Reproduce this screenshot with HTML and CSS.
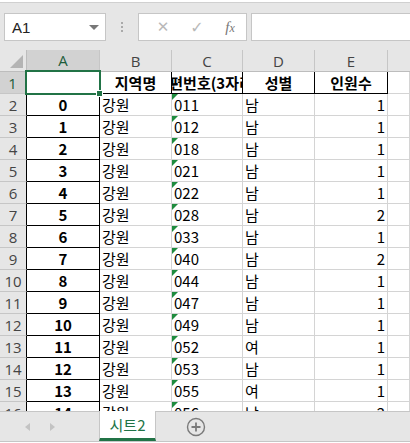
FILE: index.html
```html
<!DOCTYPE html>
<html>
<head>
<meta charset="utf-8">
<link rel="stylesheet" href="styles.css">
</head>
<body>
<div class="app">
  <div class="fbar">
    <div class="namebox"><span class="nb-text">A1</span><span class="nb-arrow"></span></div>
    <div class="dots"><i></i><i></i><i></i></div>
    <div class="cmdbox">
      <span class="cmd x">✕</span>
      <span class="cmd ok">✓</span>
      <span class="cmd fx"><i>f</i><i class="sx">x</i></span>
    </div>
    <div class="formula"></div>
  </div>

  <div class="sheet">
    <div class="corner"><span class="tri"></span></div>
    <div class="ch sel">A</div>
    <div class="ch">B</div>
    <div class="ch">C</div>
    <div class="ch">D</div>
    <div class="ch">E</div>
    <div class="ch last"></div>

    <div class="rh sel">1</div>
    <div class="c bk a1"><span class="handle"></span></div>
    <div class="c bk bold ctr">지역명</div>
    <div class="c bk bold ctr clip"><span>우편번호(3자리)</span></div>
    <div class="c bk bold ctr">성별</div>
    <div class="c bk bold ctr">인원수</div>
    <div class="c"></div>

    <div class="rh">2</div><div class="c bk bold ctr">0</div><div class="c">강원</div><div class="c tri-c">011</div><div class="c">남</div><div class="c num">1</div><div class="c"></div>
    <div class="rh">3</div><div class="c bk bold ctr">1</div><div class="c">강원</div><div class="c tri-c">012</div><div class="c">남</div><div class="c num">1</div><div class="c"></div>
    <div class="rh">4</div><div class="c bk bold ctr">2</div><div class="c">강원</div><div class="c tri-c">018</div><div class="c">남</div><div class="c num">1</div><div class="c"></div>
    <div class="rh">5</div><div class="c bk bold ctr">3</div><div class="c">강원</div><div class="c tri-c">021</div><div class="c">남</div><div class="c num">1</div><div class="c"></div>
    <div class="rh">6</div><div class="c bk bold ctr">4</div><div class="c">강원</div><div class="c tri-c">022</div><div class="c">남</div><div class="c num">1</div><div class="c"></div>
    <div class="rh">7</div><div class="c bk bold ctr">5</div><div class="c">강원</div><div class="c tri-c">028</div><div class="c">남</div><div class="c num">2</div><div class="c"></div>
    <div class="rh">8</div><div class="c bk bold ctr">6</div><div class="c">강원</div><div class="c tri-c">033</div><div class="c">남</div><div class="c num">1</div><div class="c"></div>
    <div class="rh">9</div><div class="c bk bold ctr">7</div><div class="c">강원</div><div class="c tri-c">040</div><div class="c">남</div><div class="c num">2</div><div class="c"></div>
    <div class="rh">10</div><div class="c bk bold ctr">8</div><div class="c">강원</div><div class="c tri-c">044</div><div class="c">남</div><div class="c num">1</div><div class="c"></div>
    <div class="rh">11</div><div class="c bk bold ctr">9</div><div class="c">강원</div><div class="c tri-c">047</div><div class="c">남</div><div class="c num">1</div><div class="c"></div>
    <div class="rh">12</div><div class="c bk bold ctr">10</div><div class="c">강원</div><div class="c tri-c">049</div><div class="c">남</div><div class="c num">1</div><div class="c"></div>
    <div class="rh">13</div><div class="c bk bold ctr">11</div><div class="c">강원</div><div class="c tri-c">052</div><div class="c">여</div><div class="c num">1</div><div class="c"></div>
    <div class="rh">14</div><div class="c bk bold ctr">12</div><div class="c">강원</div><div class="c tri-c">053</div><div class="c">남</div><div class="c num">1</div><div class="c"></div>
    <div class="rh">15</div><div class="c bk bold ctr">13</div><div class="c">강원</div><div class="c tri-c">055</div><div class="c">여</div><div class="c num">1</div><div class="c"></div>
    <div class="rh">16</div><div class="c bk bold ctr">14</div><div class="c">강원</div><div class="c tri-c">056</div><div class="c">남</div><div class="c num">2</div><div class="c"></div>
  </div>

  <div class="tabs">
    <div class="nav">
      <span class="arr left"></span>
      <span class="arr right"></span>
    </div>
    <div class="tab">시트2</div>
    <div class="add">
      <svg width="20" height="20" viewBox="0 0 20 20"><circle cx="10" cy="10" r="8.5" fill="none" stroke="#7a7a7a" stroke-width="1.4"/><path d="M10 5.5v9M5.5 10h9" stroke="#7a7a7a" stroke-width="1.8"/></svg>
    </div>
  </div>
</div>
</body>
</html>
```

FILE: styles.css
```css
html, body {
  margin: 0;
  padding: 0;
  background: #fff;
}
.app {
  width: 410px;
  height: 443px;
  overflow: hidden;
  font-family: "Noto Sans CJK KR", "Noto Sans", sans-serif;
  display: flex;
  flex-direction: column;
}
.fbar {
  height: 48px;
  flex: none;
  background: #e6e6e6;
  border-top: 1px solid #d0d0d0;
  margin-top: 2px;
  display: flex;
  align-items: flex-start;
  padding-top: 10px;
  box-sizing: border-box;
  padding-left: 4px;
}
.namebox, .cmdbox, .formula {
  height: 28px;
  box-sizing: border-box;
  background: #fff;
  border: 1px solid #c6c6c6;
}
.namebox {
  width: 102px;
  display: flex;
  align-items: center;
  justify-content: space-between;
  padding: 0 6px 0 7px;
}
.nb-text {
  font-family: "Liberation Sans", "Noto Sans", sans-serif;
  font-size: 15px;
  color: #222;
}
.nb-arrow {
  width: 0; height: 0;
  border-left: 5px solid transparent;
  border-right: 5px solid transparent;
  border-top: 5px solid #777;
}
.dots {
  width: 32px;
  height: 28px;
  display: flex;
  flex-direction: column;
  align-items: center;
  justify-content: center;
  gap: 2px;
}
.dots i {
  display: block;
  width: 2px; height: 2px;
  background: #aaa;
}
.cmdbox {
  width: 109px;
  display: flex;
  align-items: center;
  padding-left: 10px;
}
.cmd {
  color: #b9b9b9;
  font-family: "DejaVu Sans", sans-serif;
  font-size: 15px;
  width: 36px;
  text-align: center;
}
.cmd.x { width: 28px; }
.cmd.ok { width: 40px; font-size: 16px; }
.cmd.fx {
  color: #777;
  font-family: "Liberation Serif", serif;
  font-size: 15px;
  width: 26px;
}
.cmd.fx .sx { font-size: 12px; }
.formula {
  flex: 1;
  margin-left: 4px;
  margin-right: -2px;
}

.sheet {
  flex: none;
  height: 361px;
  overflow: hidden;
  display: grid;
  grid-template-columns: 27px 73px 72px 71px 72px 73px 22px;
  grid-auto-rows: 22px;
  font-size: 15px;
  color: #000;
}
.corner {
  background: #e6e6e6;
  border-right: 1px solid #bdbdbd;
  border-bottom: 1px solid #bdbdbd;
  position: relative;
}
.tri {
  position: absolute;
  right: 3px;
  bottom: 3px;
  width: 0; height: 0;
  border-left: 13px solid transparent;
  border-bottom: 13px solid #b4b4b4;
}
.ch {
  background: #e6e6e6;
  border-right: 1px solid #c6c6c6;
  border-bottom: 1px solid #bdbdbd;
  display: flex;
  align-items: center;
  justify-content: center;
  font-family: "Open Sans", "Noto Sans", sans-serif;
  font-size: 15px;
  color: #444;
}
.ch.sel {
  background: #d2d2d2;
  color: #1d5d3b;
  border-bottom: 2px solid #217346;
}
.ch.last { border-right: none; }
.rh {
  background: #e6e6e6;
  border-right: 1px solid #000;
  border-bottom: 1px solid #c6c6c6;
  display: flex;
  align-items: center;
  justify-content: center;
  font-family: "Open Sans", "Noto Sans", sans-serif;
  font-size: 15px;
  color: #444;
}
.rh.sel {
  background: #d2d2d2;
  color: #1d5d3b;
  border-right: 2px solid #217346;
}
.c {
  border-right: 1px solid #d4d4d4;
  border-bottom: 1px solid #d4d4d4;
  display: flex;
  align-items: center;
  padding-left: 2px;
  overflow: hidden;
  white-space: nowrap;
  position: relative;
  line-height: 1;
}
.c.bk {
  border-right-color: #000;
  border-bottom-color: #000;
}
.c.bold { font-weight: bold; }
.c.ctr { justify-content: center; padding-left: 0; }
.c.num { justify-content: flex-end; padding-left: 0; padding-right: 2px; }
.c.clip span { flex: none; }
.tri-c::before {
  content: "";
  position: absolute;
  left: 0; top: 0;
  border-top: 6px solid #1e8c3e;
  border-right: 6px solid transparent;
}
.a1 { overflow: visible; }
.a1::after {
  content: "";
  position: absolute;
  left: -2px; top: -2px; right: -2px; bottom: -2px;
  border: 2px solid #217346;
}
.handle {
  position: absolute;
  right: -4px;
  bottom: -4px;
  width: 5px; height: 5px;
  background: #217346;
  border: 1px solid #fff;
  z-index: 2;
}

.tabs {
  flex: none;
  height: 29px;
  background: #e6e6e6;
  border-top: 1px solid #c6c6c6;
  border-bottom: 1px solid #c6c6c6;
  display: flex;
  align-items: stretch;
}
.nav {
  width: 99px;
  display: flex;
  align-items: center;
  padding-left: 25px;
  gap: 20px;
  box-sizing: border-box;
}
.arr {
  width: 0; height: 0;
  border-top: 4px solid transparent;
  border-bottom: 4px solid transparent;
}
.arr.left { border-right: 5px solid #c3c3c3; }
.arr.right { border-left: 5px solid #c3c3c3; }
.tab {
  width: 57px;
  margin-top: -1px;
  background: #fff;
  border-left: 1px solid #c6c6c6;
  border-right: 1px solid #c6c6c6;
  border-bottom: 3px solid #217346;
  box-sizing: border-box;
  display: flex;
  align-items: center;
  justify-content: center;
  color: #217346;
  font-size: 15px;
}
.add {
  width: 80px;
  display: flex;
  align-items: center;
  justify-content: center;
}
```
